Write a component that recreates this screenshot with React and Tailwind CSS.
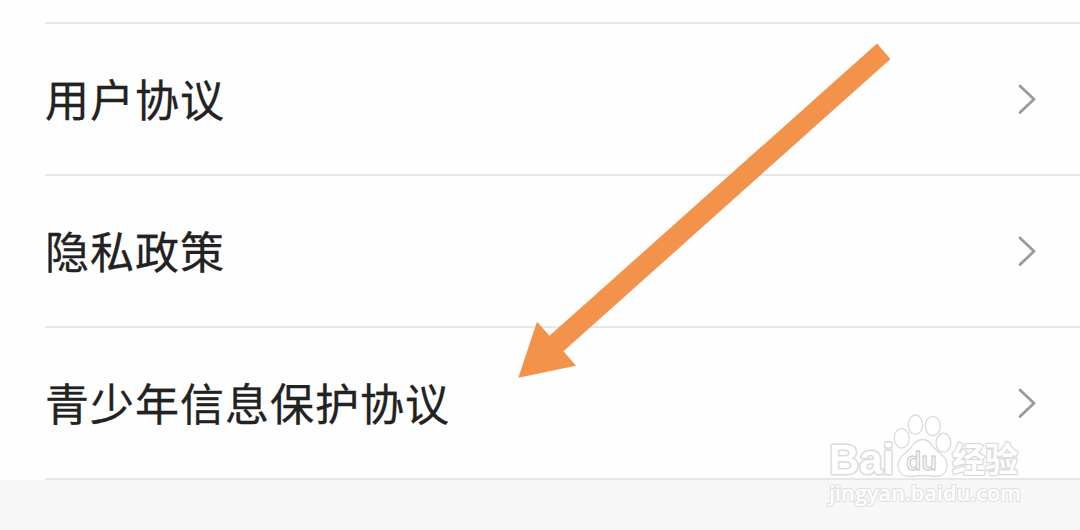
import React from 'react';

const items = ['用户协议', '隐私政策', '青少年信息保护协议'];

const Chevron = () => (
  <svg className="mr-[43px] shrink-0" width="20" height="32" viewBox="0 0 20 32" fill="none">
    <path d="M3 3 L17 16.3 L3 29.5" stroke="#999999" strokeWidth="2.7" strokeLinecap="round" />
  </svg>
);

const Row = ({ label }) => (
  <li className="flex h-[152px] items-center justify-between border-b-2 border-[#e7e7e7]">
    <span className="pb-[3px] text-[44px] leading-none tracking-[1px] text-[#222222] [-webkit-text-stroke:0.3px_#222222]">
      {label}
    </span>
    <Chevron />
  </li>
);

const Arrow = () => (
  <svg className="absolute left-0 top-0" width="1080" height="530" viewBox="0 0 1080 530">
    <path
      d="M877 43.5 L890.5 59 L563.5 351.3 L576 365.7 L518.3 377.8 L537 321.8 L549.5 335.8 Z"
      fill="#f3924b"
    />
  </svg>
);

const Watermark = () => (
  <svg
    className="absolute left-[820px] top-[408px]"
    width="212"
    height="104"
    viewBox="820 408 212 104"
    fill="#ffffff"
    stroke="#dadada"
    strokeWidth="1.3"
    strokeLinejoin="round"
  >
    <g className="font-['Liberation_Sans','Noto_Sans_CJK_SC',sans-serif] font-bold">
      <text x="829" y="473.5" fontSize="42" textLength="65" lengthAdjust="spacingAndGlyphs" strokeWidth="3" paintOrder="stroke">
        Bai
      </text>
      <ellipse cx="901.7" cy="438.3" rx="7.5" ry="9.7" />
      <ellipse cx="915.4" cy="424.7" rx="7.2" ry="9.7" />
      <ellipse cx="932.8" cy="426" rx="7.6" ry="9.6" />
      <ellipse cx="943.4" cy="442.7" rx="7.4" ry="9.5" />
      <path d="M922.5 439.5 C928 439.5 931 443 934 447.5 C938 453 947 456 947 465 C947 472 943 476.3 936 476.3 C930 476.3 927 475.3 922.5 475.3 C918 475.3 915 476.3 909 476.3 C902 476.3 898 472 898 465 C898 456 907 453 911 447.5 C914 443 917 439.5 922.5 439.5 Z" />
      <text
        className="font-['Open_Sans',sans-serif] font-semibold"
        x="906"
        y="469.5"
        fontSize="25"
        textLength="31"
        lengthAdjust="spacingAndGlyphs"
        stroke="#cfcfcf"
      >
        du
      </text>
      <text x="952" y="471.5" fontSize="34" textLength="66" lengthAdjust="spacingAndGlyphs" strokeWidth="2.6" paintOrder="stroke">
        经验
      </text>
    </g>
    <text
      className="font-['Open_Sans',sans-serif] font-semibold"
      x="829"
      y="500.5"
      fontSize="22"
      textLength="192"
      lengthAdjust="spacingAndGlyphs"
      stroke="#e0e0e0"
      strokeWidth="2.2"
      paintOrder="stroke"
    >
      jingyan.baidu.com
    </text>
  </svg>
);

const App = () => {
  return (
    <div className="relative h-[530px] w-[1080px] overflow-hidden bg-[#f7f7f7] font-['Noto_Sans_CJK_SC',sans-serif]">
      <div className="bg-[#fefefe] pl-[45px] pt-[22px]">
        <ul className="border-t-2 border-[#e7e7e7]">
          {items.map((label) => (
            <Row key={label} label={label} />
          ))}
        </ul>
      </div>
      <Arrow />
      <Watermark />
    </div>
  );
};

export default App;
